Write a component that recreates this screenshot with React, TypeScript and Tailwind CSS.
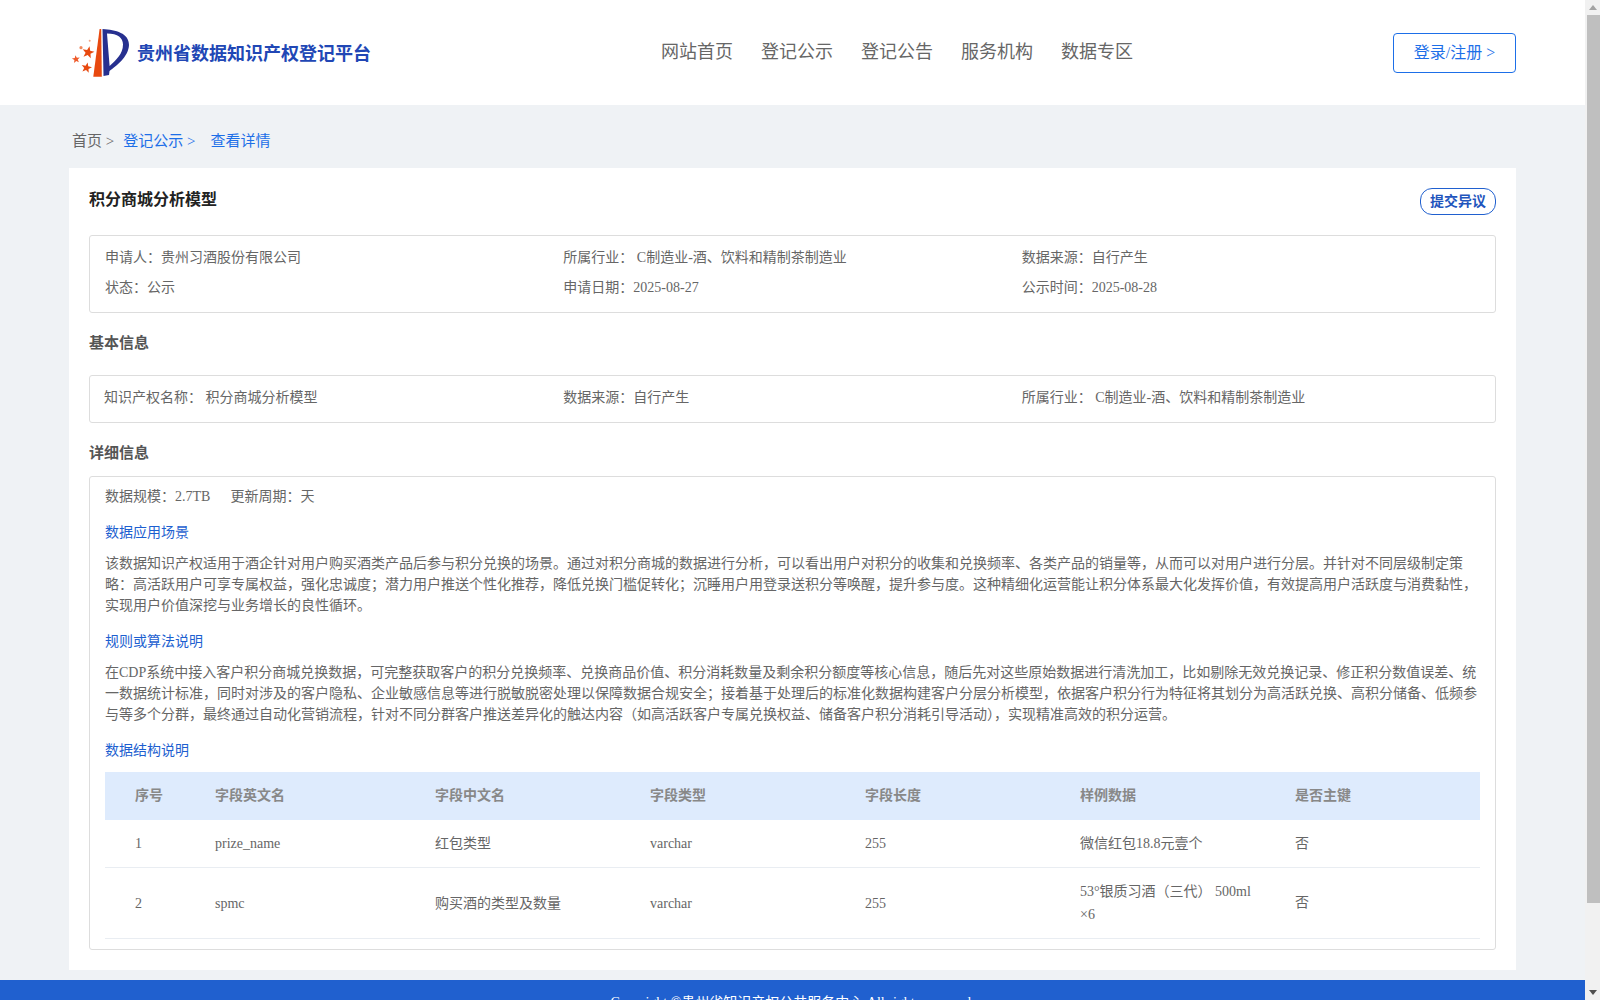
const font = "font-['Liberation_Serif','Noto_Sans_CJK_SC',serif]";

const fields = [
  { no: "1", en: "prize_name", zh: "红包类型", type: "varchar", len: "255", sample: "微信红包18.8元壹个", key: "否", h: "h-[48px]" },
  { no: "2", en: "spmc", zh: "购买酒的类型及数量", type: "varchar", len: "255", sample: "53°银质习酒（三代） 500ml ×6", key: "否", h: "h-[71px]" },
];

function starPoints(cx: number, cy: number, r: number, rot: number) {
  const pts: string[] = [];
  for (let i = 0; i < 10; i++) {
    const rad = i % 2 === 0 ? r : r * 0.42;
    const a = ((rot + i * 36 - 90) * Math.PI) / 180;
    pts.push((cx + rad * Math.cos(a)).toFixed(2) + "," + (cy + rad * Math.sin(a)).toFixed(2));
  }
  return pts.join(" ");
}

function Logo() {
  return (
    <svg width="70" height="58" viewBox="0 0 70 58" className="shrink-0">
      <path d="M33.6 5 L35.2 5 L35.8 52.7 L27.3 52.7 Z" fill="#e8490f" />
      <path
        d="M36.5 5 C50 6 63 9 63 21 C62.5 33 50 42 43.5 47 L43 51 L37.5 52 Z M41 9.5 L43.6 42 C50 36 57 30 57 20.5 C57 14 52 9.5 41 9.5 Z"
        fill="#27308f"
        fillRule="evenodd"
      />
      <polygon points={starPoints(22.2, 28.5, 6.3, 12)} fill="#e8490f" />
      <polygon points={starPoints(10, 35.3, 4.2, -8)} fill="#ee5a2a" />
      <polygon points={starPoints(20.5, 43.8, 5.5, 12)} fill="#e8490f" />
      <circle cx="15" cy="23.7" r="1.6" fill="#f08a60" />
      <circle cx="23.7" cy="16.7" r="1" fill="#f4a585" />
    </svg>
  );
}

function Scrollbar() {
  return (
    <div className="fixed top-0 right-0 h-[1000px] w-[15px] bg-[#f1f1f1] flex flex-col items-end">
      <div className="h-[15px] w-full flex items-center justify-center">
        <svg width="8" height="5" viewBox="0 0 8 5"><path d="M4 0 L8 5 L0 5 Z" fill="#a3a3a3" /></svg>
      </div>
      <div className="w-[13px] h-[888px] bg-[#bfbfbf]" />
      <div className="flex-1 w-full flex items-end justify-center pb-[5px]">
        <svg width="8" height="5" viewBox="0 0 8 5"><path d="M0 0 L8 0 L4 5 Z" fill="#505050" /></svg>
      </div>
    </div>
  );
}

function Head() {
  return (
    <header className="h-[105px] bg-white flex items-center pl-[66px] pr-[69px]">
      <div className="flex items-center gap-[1px] w-[595px]">
        <Logo />
        <span className="text-[18px] font-bold text-[#2147b5] whitespace-nowrap mt-[3px]">贵州省数据知识产权登记平台</span>
      </div>
      <nav className="flex gap-[28px] text-[18px] text-[#666]">
        <a>网站首页</a>
        <a>登记公示</a>
        <a>登记公告</a>
        <a>服务机构</a>
        <a>数据专区</a>
      </nav>
      <button className="ml-auto w-[123px] h-[40px] border border-[#1d6fe8] rounded-[4px] text-[16px] text-[#1d6fe8] mt-[1px]">
        登录/注册 &gt;
      </button>
    </header>
  );
}

function Info({ children, className = "" }: { children: React.ReactNode; className?: string }) {
  return <div className={"text-[14px] leading-[20px] text-[#666] whitespace-nowrap " + className}>{children}</div>;
}

function Heading({ children }: { children: React.ReactNode }) {
  return <h3 className="text-[15px] font-bold text-[#555] leading-[22px]">{children}</h3>;
}

function Sub({ children }: { children: React.ReactNode }) {
  return <h4 className="text-[14px] text-[#1d5fd0] leading-[20px]">{children}</h4>;
}

function Para({ children }: { children: React.ReactNode }) {
  return <p className="text-[14px] text-[#666] leading-[21px]">{children}</p>;
}

export default function App() {
  return (
    <div className={font + " bg-[#eff2f5] min-h-screen mr-[15px]"}>
      <Head />
      <div className="pl-[69px] pr-[69px]">
        <div className="h-[63px] flex items-center pl-[3px] text-[15px] pt-[9px]">
          <span className="text-[#666]">首页 &gt;</span>
          <span className="text-[#1d6fe8] ml-[9px]">登记公示 &gt;</span>
          <span className="text-[#1d6fe8] ml-[15px]">查看详情</span>
        </div>
        <main className="bg-white px-[20px] pb-[20px]">
          <div className="flex items-center justify-between h-[67px]">
            <h2 className="text-[16px] font-bold text-[#222] -mt-[4px]">积分商城分析模型</h2>
            <button className="w-[76px] h-[27px] border border-[#2060cf] rounded-[12px] text-[14px] font-bold text-[#1f55bd]">提交异议</button>
          </div>

          <section className="h-[78px] border border-[#ddd] rounded-[3px] px-[15px] pt-[12px] grid grid-cols-3 content-start gap-y-[10px]">
            <Info>申请人：贵州习酒股份有限公司</Info>
            <Info>所属行业： C制造业-酒、饮料和精制茶制造业</Info>
            <Info>数据来源：自行产生</Info>
            <Info>状态：公示</Info>
            <Info>申请日期：2025-08-27</Info>
            <Info>公示时间：2025-08-28</Info>
          </section>

          <div className="h-[62px] flex items-center pb-[3px]">
            <Heading>基本信息</Heading>
          </div>

          <section className="h-[48px] border border-[#ddd] rounded-[3px] px-[15px] pb-[2px] grid grid-cols-3 items-center">
            <Info className="-ml-[1px]">知识产权名称： 积分商城分析模型</Info>
            <Info>数据来源：自行产生</Info>
            <Info>所属行业： C制造业-酒、饮料和精制茶制造业</Info>
          </section>

          <div className="h-[53px] flex items-center pt-[6px]">
            <Heading>详细信息</Heading>
          </div>

          <section className="border border-[#ddd] rounded-[3px] px-[15px] pb-[10px]">
            <div className="flex gap-[20px] h-[40px] items-center text-[14px] text-[#666] -mt-[1px]">
              <span>数据规模：2.7TB</span>
              <span>更新周期：天</span>
            </div>
            <div className="pt-[7px] pb-[10px]"><Sub>数据应用场景</Sub></div>
            <Para>该数据知识产权适用于酒企针对用户购买酒类产品后参与积分兑换的场景。通过对积分商城的数据进行分析，可以看出用户对积分的收集和兑换频率、各类产品的销量等，从而可以对用户进行分层。并针对不同层级制定策略：高活跃用户可享专属权益，强化忠诚度；潜力用户推送个性化推荐，降低兑换门槛促转化；沉睡用户用登录送积分等唤醒，提升参与度。这种精细化运营能让积分体系最大化发挥价值，有效提高用户活跃度与消费黏性，实现用户价值深挖与业务增长的良性循环。</Para>
            <div className="pt-[16px] pb-[10px]"><Sub>规则或算法说明</Sub></div>
            <Para>在CDP系统中接入客户积分商城兑换数据，可完整获取客户的积分兑换频率、兑换商品价值、积分消耗数量及剩余积分额度等核心信息，随后先对这些原始数据进行清洗加工，比如剔除无效兑换记录、修正积分数值误差、统一数据统计标准，同时对涉及的客户隐私、企业敏感信息等进行脱敏脱密处理以保障数据合规安全；接着基于处理后的标准化数据构建客户分层分析模型，依据客户积分行为特征将其划分为高活跃兑换、高积分储备、低频参与等多个分群，最终通过自动化营销流程，针对不同分群客户推送差异化的触达内容（如高活跃客户专属兑换权益、储备客户积分消耗引导活动），实现精准高效的积分运营。</Para>
            <div className="pt-[16px] pb-[11px]"><Sub>数据结构说明</Sub></div>
            <div>
              <div className="flex h-[48px] items-center bg-[#deebfd] text-[14px] font-bold text-[#888] pb-[1px]">
                <div className="w-[110px] pl-[30px]">序号</div>
                <div className="w-[220px]">字段英文名</div>
                <div className="w-[215px]">字段中文名</div>
                <div className="w-[215px]">字段类型</div>
                <div className="w-[215px]">字段长度</div>
                <div className="w-[215px]">样例数据</div>
                <div className="flex-1">是否主键</div>
              </div>
              {fields.map((f) => (
                <div key={f.no} className={"flex items-center border-b border-[#e9edf2] text-[14px] text-[#666] " + f.h}>
                  <div className="w-[110px] pl-[30px]">{f.no}</div>
                  <div className="w-[220px]">{f.en}</div>
                  <div className="w-[215px]">{f.zh}</div>
                  <div className="w-[215px]">{f.type}</div>
                  <div className="w-[215px]">{f.len}</div>
                  <div className="w-[215px] pr-[30px] leading-[23px]">{f.sample}</div>
                  <div className="flex-1 pb-[1px]">{f.key}</div>
                </div>
              ))}
            </div>
          </section>
        </main>
      </div>
      <footer className="mt-[10px] h-[108px] bg-[#2060cf] text-center text-[14px] text-white pt-[12px]">
        Copyright ©贵州省知识产权公共服务中心 All rights reserved.
      </footer>
      <Scrollbar />
    </div>
  );
}
